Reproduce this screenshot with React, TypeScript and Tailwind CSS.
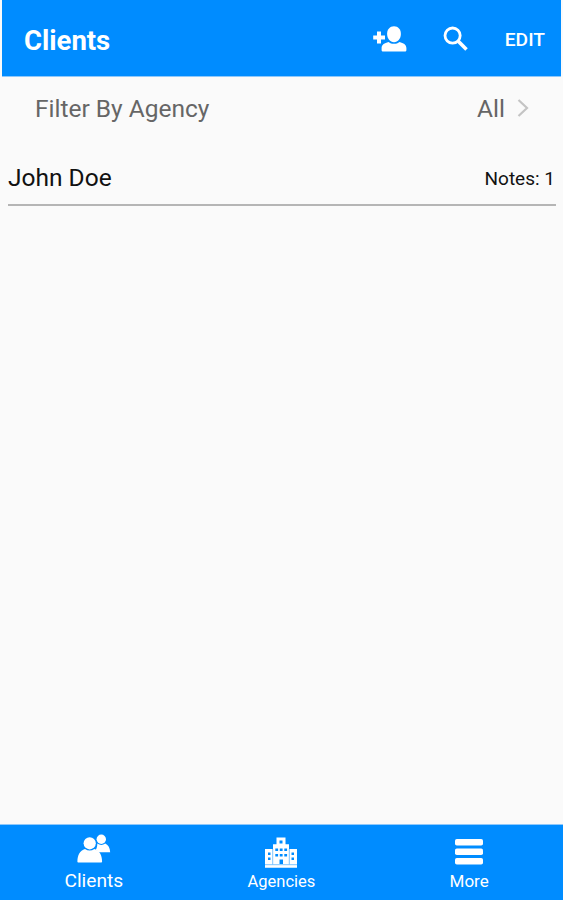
import React from 'react';

const AddPersonIcon: React.FC = () => (
  <svg width="34" height="26" viewBox="0 0 34 26" fill="#fff">
    <path d="M4 5.500h4v4h4v4H8v4H4v-4H.2v-4H4z" />
    <path d="M21 .2c4.200 0 6.900 3.200 6.900 7.600 0 4.900-3 8.400-6.900 8.400s-6.900-3.500-6.900-8.400C14.100 3.400 16.800.2 21 .2z" />
    <path d="M15.500 15.900c1.500 1.200 3.300 1.900 5.500 1.900s4-.7 5.500-1.900c3.900 1 6.900 2.600 6.900 6.100v2c0 1-.6 1.600-1.600 1.600H10.200c-1 0-1.600-.6-1.600-1.600v-2c0-3.500 3-5.100 6.900-6.100z" />
  </svg>
);

const SearchIcon: React.FC = () => (
  <svg width="26" height="26" viewBox="0 0 26 26" fill="none" stroke="#fff">
    <circle cx="9.600" cy="9.600" r="7.600" strokeWidth="2.800" />
    <path d="M15.300 15.300l8.200 8.200" strokeWidth="3.600" />
  </svg>
);

const ClientsIcon: React.FC = () => (
  <svg width="34" height="30" viewBox="0 0 34 30" fill="#fff">
    <circle cx="24.300" cy="5.300" r="4.700" />
    <path d="M20.300 9.600c2.600 1.800 5.400 1.800 8 0 3.200 1.600 4.600 4.400 4.900 8.600H21.500c-.6-1-1.500-1.800-2.700-2.500 1-1.500 1.500-3.400 1.500-6.100z" />
    <circle cx="12.700" cy="9.300" r="7.200" fill="#008cff" />
    <circle cx="12.700" cy="9.300" r="6.100" />
    <path d="M8 15.100c3.100 2 6.300 2 9.400 0 5.200 1.500 7.700 6.100 7.700 12.700 0 .5-.3.800-.8.800H1.200c-.5 0-.8-.3-.8-.8 0-6.600 2.400-11.200 7.600-12.700z" />
  </svg>
);

const AgenciesIcon: React.FC = () => (
  <svg width="34" height="32" viewBox="0 0 34 32" fill="#fff">
    <path
      fillRule="evenodd"
      d="M12.500.5h9v6.700h3.500V12h8v18.700H1V12h8V7.200h3.500zM15.500 3.500v3h3v-3zM11.300 11.500v2.500h2.800v-2.500zM15.800 11.500v2.500h2.800v-2.500zM20.300 11.500v2.500h2.800v-2.500zM11.300 17v2.500h2.800V17zM15.800 17v2.500h2.800V17zM20.300 17v2.500h2.800V17zM4 15.500V18h2.500v-2.500zM4 20.500V23h2.500v-2.500zM27.500 15.500V18H30v-2.500zM27.500 20.500V23H30v-2.500zM15.500 22.500V27H19v-4.500z"
    />
    <path d="M1 27.700h32M8.700 12v15.500M25.300 12v15.500" fill="none" stroke="#5db5ff" strokeWidth=".8" />
  </svg>
);

const MoreIcon: React.FC = () => (
  <svg width="28" height="26" viewBox="0 0 28 26" fill="#fff">
    <rect y="0" width="28" height="6.500" rx="1.800" />
    <rect y="9.500" width="28" height="6.500" rx="1.800" />
    <rect y="19" width="28" height="6.500" rx="1.800" />
  </svg>
);

const App: React.FC = () => {
  return (
    <div className="flex h-[900px] w-full flex-col bg-[#fafafa] font-[Roboto,sans-serif]">
      {/* Header */}
      <header className="mx-0.5 flex h-[77px] shrink-0 items-center border-b border-[#8ec8fb] bg-[#008cff] pl-[22px] pr-4 text-white">
        <h1 className="mt-1.5 flex-1 text-[27.5px] font-bold leading-8">Clients</h1>
        <button className="mr-9 mt-px"><AddPersonIcon /></button>
        <button className="mr-9 mt-0.5"><SearchIcon /></button>
        <button className="mt-1 text-[19.2px] font-medium">EDIT</button>
      </header>

      {/* Agency filter */}
      <div className="flex h-16 shrink-0 items-center pl-[35px] pr-[34px] text-[24.5px] text-[#666]">
        <span className="flex-1">Filter By Agency</span>
        <span>All</span>
        <svg className="-mt-0.5 ml-3" width="12" height="18" viewBox="0 0 12 18" fill="none" stroke="#c4c4c4" strokeWidth="2.200">
          <path d="M1.500 1l8.500 8-8.500 8" />
        </svg>
      </div>

      {/* Client list */}
      <main className="flex-1 pl-2 pr-[7px]">
        <div className="flex h-[65px] items-center border-b-2 border-[#b5b5b5] pt-2 text-[#111]">
          <span className="mt-[3px] flex-1 text-[24.5px]">John Doe</span>
          <span className="mr-px mt-1.5 text-[19px]">Notes: 1</span>
        </div>
      </main>

      {/* Tab bar */}
      <nav className="grid h-[76px] shrink-0 grid-cols-3 border-t border-[#8ec8fb] bg-[#008cff] text-white">
        <div className="flex flex-col items-center pt-[9px]">
          <ClientsIcon />
          <span className="mt-[5px] text-[19.2px] leading-6">Clients</span>
        </div>
        <div className="flex flex-col items-center pt-3">
          <AgenciesIcon />
          <span className="mt-px text-[16.500px] leading-6">Agencies</span>
        </div>
        <div className="flex flex-col items-center pt-3.5">
          <MoreIcon />
          <span className="mt-1 text-[17px] leading-6">More</span>
        </div>
      </nav>
    </div>
  );
};

export default App;
